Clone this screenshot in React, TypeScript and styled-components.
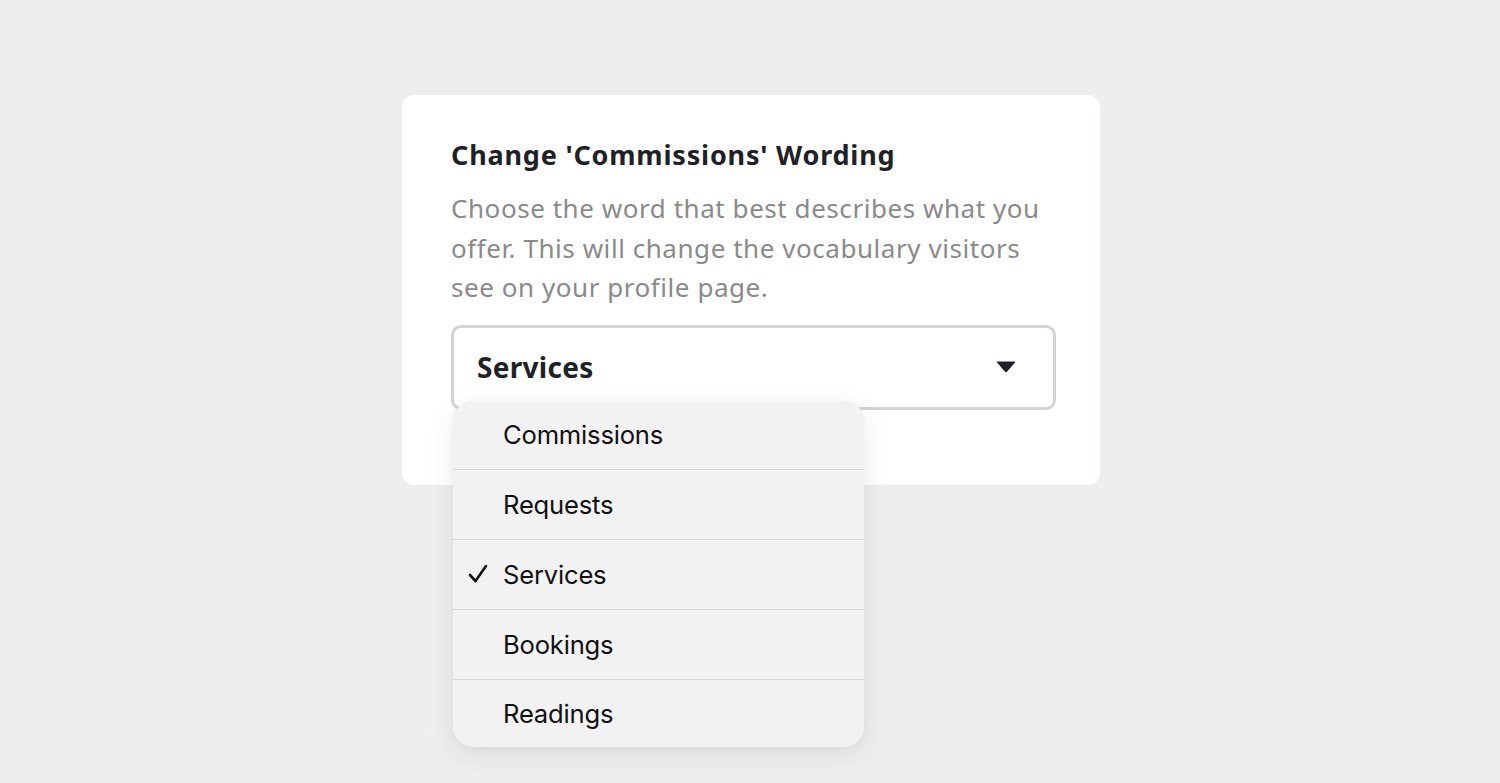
import React from "react";
import styled, { createGlobalStyle } from "styled-components";

const Global = createGlobalStyle`
  html, body { margin: 0; padding: 0; background: #efeeec; }
  body { font-family: "Noto Sans", Lato, sans-serif; }
`;

const Page = styled.div`
  min-height: 783px;
  display: flex;
  justify-content: center;
  padding-top: 95px;
  box-sizing: border-box;
`;

const Card = styled.div`
  width: 698px;
  height: 390px;
  box-sizing: border-box;
  background: #ffffff;
  border-radius: 12px;
  padding: 38px 44px 0 49px;
  margin-left: 2px;
`;

const Title = styled.h2`
  margin: 0;
  font-size: 27px;
  font-weight: 700;
  color: #1e2227;
  line-height: 44px;
  letter-spacing: 0.8px;
`;

const Desc = styled.p`
  margin: 12px 0 0;
  font-size: 26px;
  line-height: 39.5px;
  color: #8a8a8a;
  font-weight: 400;
  letter-spacing: 0.55px;
`;

const SelectWrap = styled.div`
  position: relative;
  margin-top: 17px;
`;

const SelectBox = styled.div`
  height: 85px;
  box-sizing: border-box;
  border: 3px solid #d3d3d3;
  border-radius: 10px;
  display: flex;
  align-items: center;
  justify-content: space-between;
  padding: 0 37px 0 23px;
  font-size: 28px;
  font-weight: 700;
  color: #1e2227;
  letter-spacing: 0.3px;
`;

const Menu = styled.ul`
  position: absolute;
  top: 76px;
  left: 2px;
  width: 411px;
  margin: 0;
  padding: 0;
  list-style: none;
  background: #f2f2f2;
  border-radius: 20px;
  box-shadow: 0 8px 30px rgba(0, 0, 0, 0.08), 0 1px 4px rgba(0, 0, 0, 0.04);
  overflow: hidden;
  font-family: Inter, Roboto, sans-serif;
`;

const Item = styled.li`
  height: 70px;
  box-sizing: border-box;
  display: flex;
  align-items: center;
  padding-left: 15px;
  font-size: 25.6px;
  color: #111;
  letter-spacing: -0.2px;
  & + & { border-top: 1.5px solid #d6d6d6; }
  &:first-child, &:last-child { height: 68px; }
`;

const CheckSlot = styled.span`
  width: 35px;
  display: flex;
  align-items: center;
`;

const options = ["Commissions", "Requests", "Services", "Bookings", "Readings"];
const selected = "Services";

export default function App() {
  return (
    <>
      <Global />
      <Page>
        <Card>
          <Title>Change 'Commissions' Wording</Title>
          <Desc>
            Choose the word that best describes what you offer. This will change the vocabulary visitors see on your
            profile page.
          </Desc>
          <SelectWrap>
            <SelectBox>
              <span>Services</span>
              <svg width="20" height="12" viewBox="0 0 20 12">
                <path d="M1 1.5 Q0.5 0.5 2 0.5 H18 Q19.5 0.5 19 1.5 L11.2 10.5 Q10 11.8 8.8 10.5 Z" fill="#1e2227" />
              </svg>
            </SelectBox>
            <Menu>
              {options.map((o) => (
                <Item key={o}>
                  <CheckSlot>
                    {o === selected && (
                      <svg width="20" height="20" viewBox="0 0 20 20">
                        <path d="M2 11 L7.5 17 L18 2" fill="none" stroke="#111" strokeWidth="2.6" strokeLinecap="round" strokeLinejoin="round" />
                      </svg>
                    )}
                  </CheckSlot>
                  {o}
                </Item>
              ))}
            </Menu>
          </SelectWrap>
        </Card>
      </Page>
    </>
  );
}
